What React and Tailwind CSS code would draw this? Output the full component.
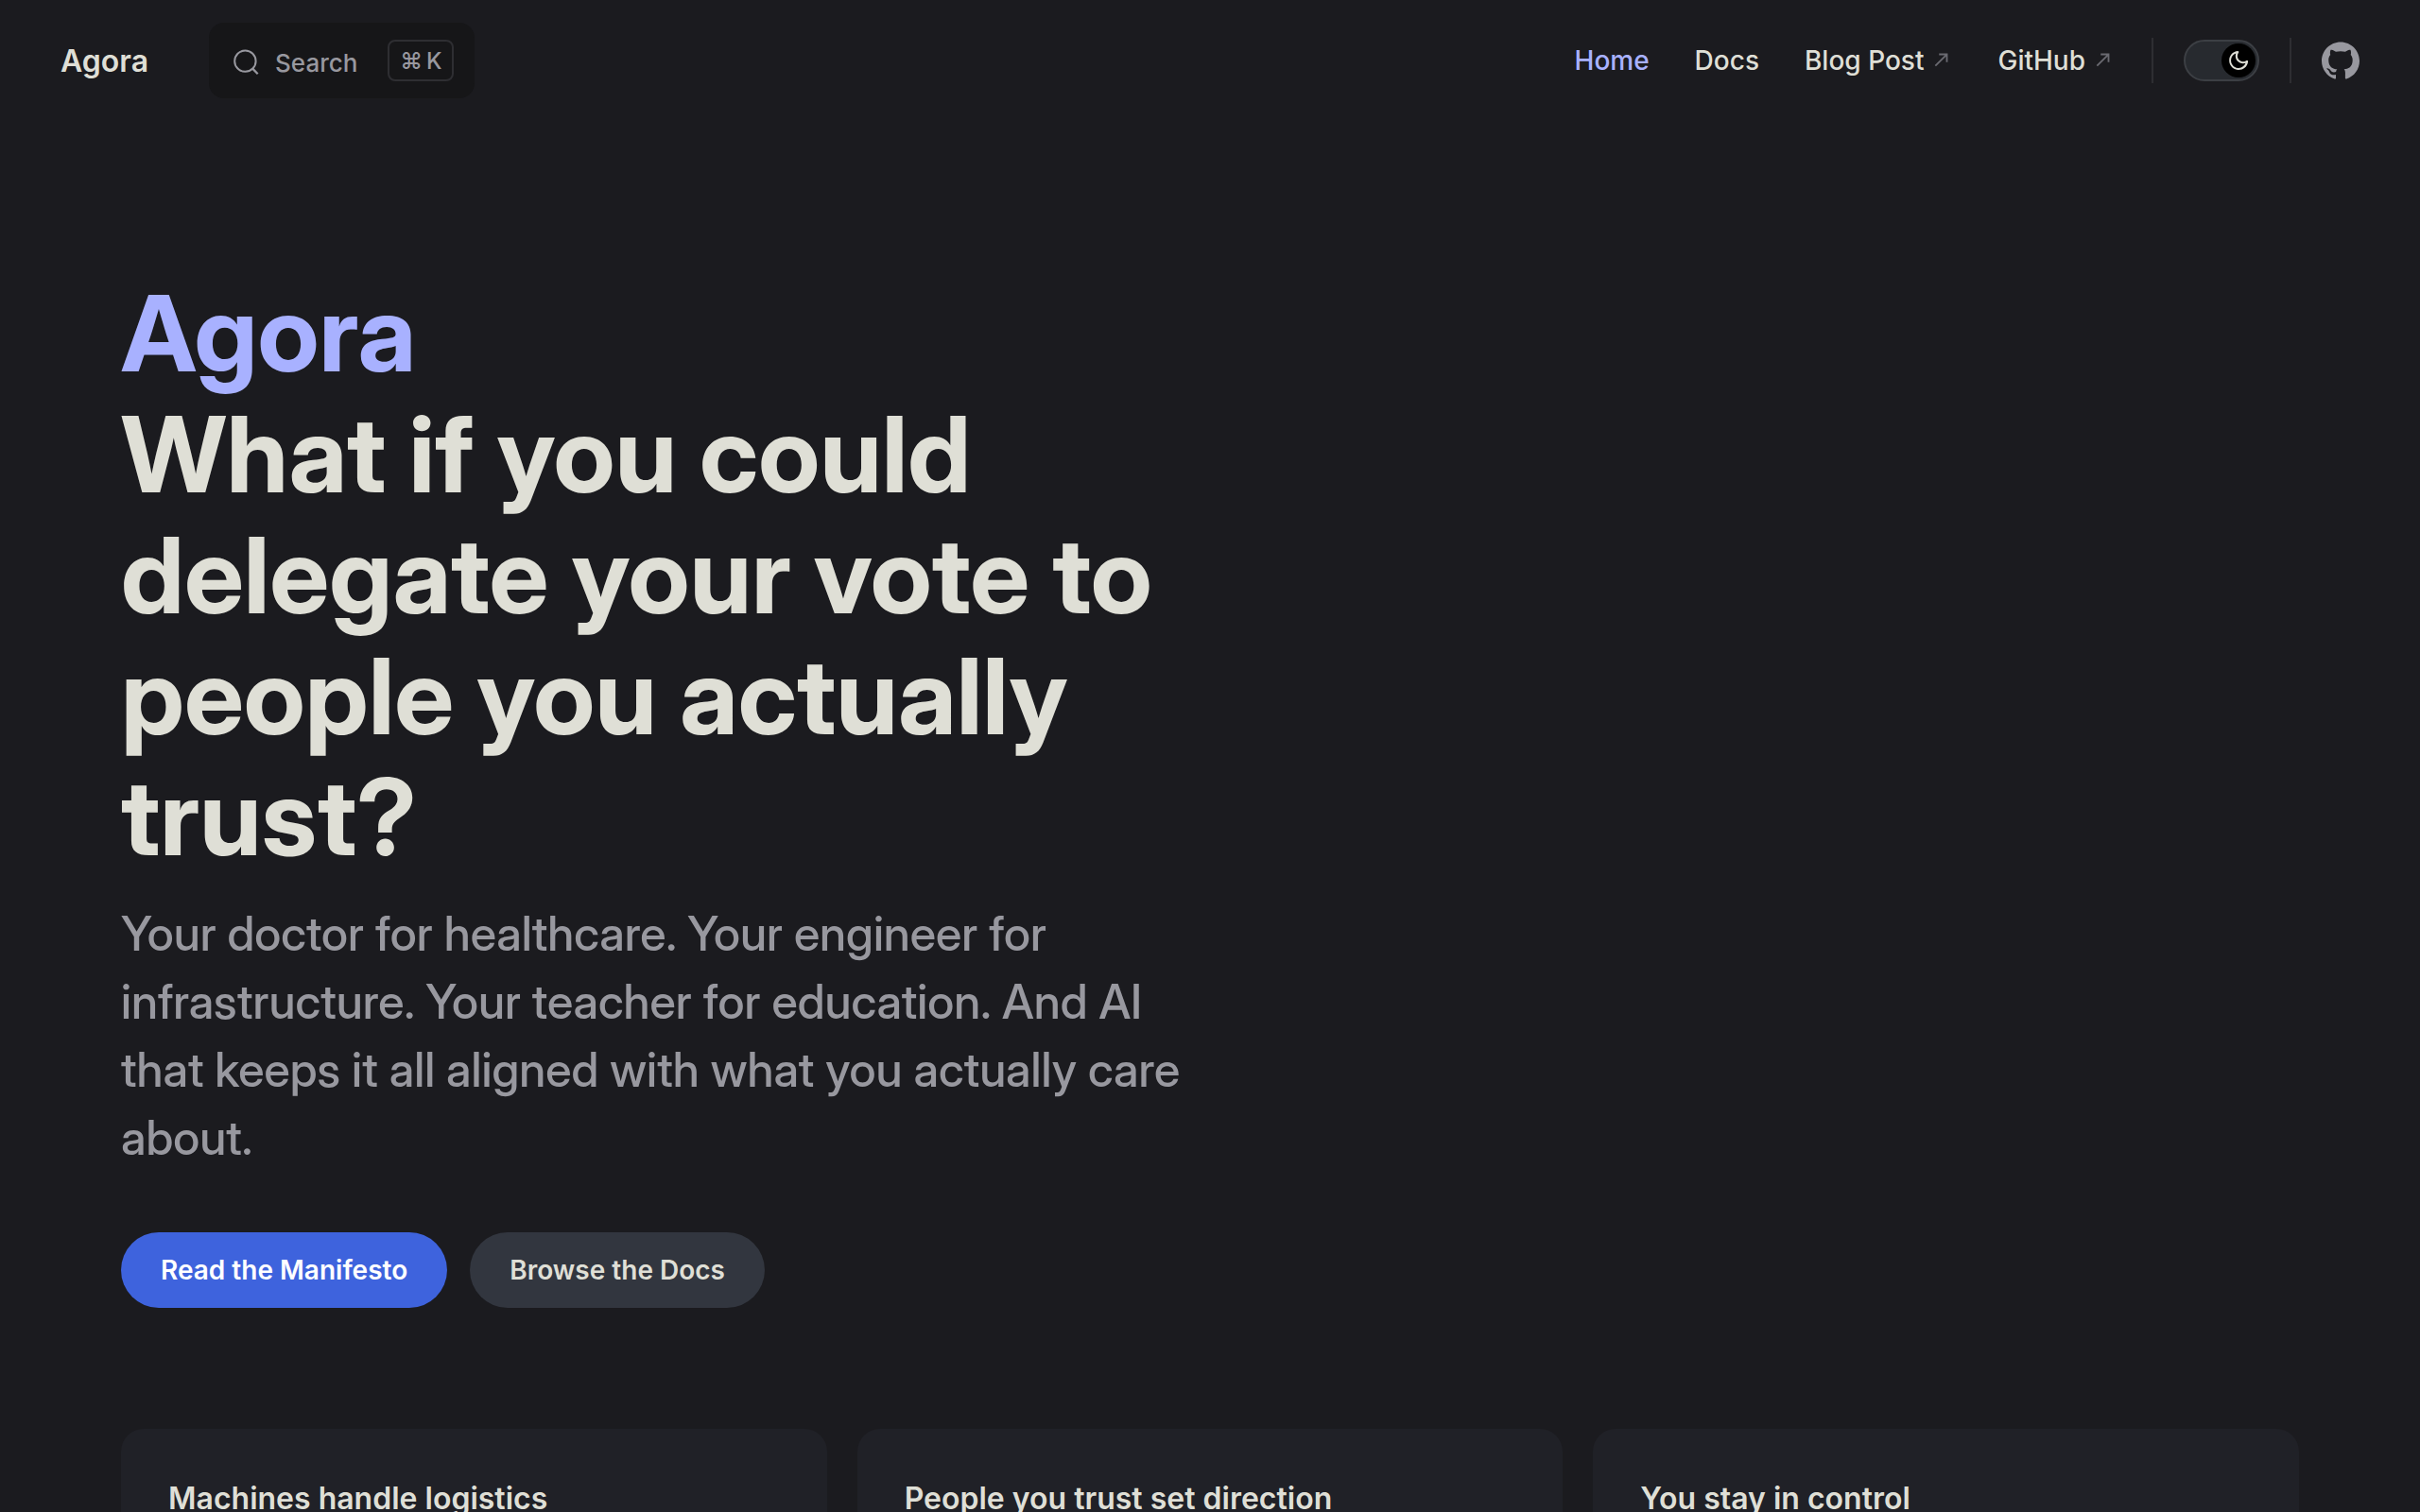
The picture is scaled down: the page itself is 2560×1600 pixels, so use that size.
import React from 'react';
import { SiGithub } from 'react-icons/si';

const navLinks = [
  { text: 'Home', href: '#', active: true },
  { text: 'Docs', href: '#docs' },
  { text: 'Blog Post', href: '#blog', external: true },
  { text: 'GitHub', href: '#github', external: true },
];

const features = [
  'Machines handle logistics',
  'People you trust set direction',
  'You stay in control',
];

const ExternalIcon = () => (
  <svg viewBox="0 0 24 24" className="w-[22px] h-[22px] mb-0.5 ml-2 text-[#6a6a71]" fill="currentColor" aria-hidden="true">
    <path d="M9 5v2h6.59L4 18.59 5.41 20 17 8.41V15h2V5H9z" />
  </svg>
);

const MoonIcon = () => (
  <svg viewBox="0 0 24 24" className="w-6 h-6" fill="currentColor" aria-hidden="true">
    <path
      fillRule="evenodd"
      d="M12.1,22c-0.3,0-0.6,0-0.9,0c-5.5-0.5-9.5-5.4-9-10.9c0.4-4.8,4.2-8.6,9-9c0.4,0,0.8,0.2,1,0.5c0.2,0.3,0.2,0.8-0.1,1.1c-2,2.7-1.4,6.4,1.3,8.4c2.1,1.6,5,1.6,7.1,0c0.3-0.2,0.7-0.3,1.1-0.1c0.3,0.2,0.5,0.6,0.5,1c-0.2,2.7-1.5,5.1-3.6,6.8C16.6,21.2,14.4,22,12.1,22zM9.3,4.4c-2.9,1-5,3.6-5.2,6.8c-0.4,4.4,2.8,8.3,7.2,8.7c2.1,0.2,4.2-0.4,5.8-1.8c1.1-0.9,1.9-2.1,2.4-3.4c-2.5,0.9-5.3,0.5-7.5-1.1C9.2,11.4,8.1,7.7,9.3,4.4z"
    />
  </svg>
);

const SearchButton = () => (
  <button type="button" className="flex items-center h-20 pl-6 pr-[22px] rounded-2xl bg-[#161618] text-[#98989f]">
    <svg viewBox="0 0 20 20" className="w-8 h-8" fill="none" stroke="currentColor" aria-hidden="true">
      <circle cx="9" cy="10.4" r="7" strokeWidth="1.25" />
      <path d="M13.9 15.4l3.4 3.5" strokeWidth="1.4" />
    </svg>
    <span className="ml-3.5 mt-1.5 text-[26px] leading-8 font-medium">Search</span>
    <span className="flex items-center justify-center gap-1 w-[70px] h-11 ml-8 pt-0.5 rounded-lg border-2 border-[#2e2e32] text-2xl font-medium">
      <kbd className="font-[Inter,sans-serif]">⌘</kbd>
      <kbd className="font-[Inter,sans-serif]">K</kbd>
    </span>
  </button>
);

const Navbar = () => {
  return (
    <header className="flex items-center justify-between h-32 px-16">
      <div className="flex items-center gap-16">
        <a href="#" className="mt-0.5 text-[32px] font-semibold">Agora</a>
        <SearchButton />
      </div>

      <div className="flex items-center">
        <nav className="flex items-center text-[28px] font-medium">
          {navLinks.map((link) => (
            <a
              key={link.text}
              href={link.href}
              className={link.active ? 'flex items-center px-6 text-[#a8b1ff]' : 'flex items-center px-6'}
            >
              {link.text}
              {link.external && <ExternalIcon />}
            </a>
          ))}
        </nav>

        {/* Theme switch */}
        <div className="w-0.5 h-12 ml-4 mr-8 bg-[#2e2e32]" />
        <button
          type="button"
          role="switch"
          aria-checked="true"
          aria-label="Dark mode"
          className="flex items-center justify-end w-20 h-11 p-0.5 rounded-full border-2 border-[#3c3f44] bg-[#272a2f]"
        >
          <span className="flex items-center justify-center w-9 h-9 rounded-full bg-black">
            <MoonIcon />
          </span>
        </button>

        <div className="w-0.5 h-12 mx-8 bg-[#2e2e32]" />
        <a href="#github" aria-label="GitHub" className="text-[#98989f]">
          <SiGithub className="w-10 h-10" />
        </a>
      </div>
    </header>
  );
};

const Hero = () => {
  return (
    <section className="px-32 pt-40 pb-32">
      <div className="max-w-[1184px] font-['Inter_Display',Inter,sans-serif]">
        <h1 className="text-[112px] leading-[128px] font-bold">
          <span className="block text-[#a8b1ff]">Agora</span>
          <span className="block">What if you could delegate your vote to people you actually trust?</span>
        </h1>
        <p className="max-w-[1152px] pt-6 text-[50px] leading-[72px] font-medium text-[#98989f]">
          Your doctor for healthcare. Your engineer for infrastructure. Your teacher for education. And AI that keeps it
          all aligned with what you actually care about.
        </p>
      </div>
      <div className="flex gap-6 pt-16 text-[28px] leading-[80px] font-semibold">
        <a href="#manifesto" className="px-[42px] rounded-full bg-[#3e63dd] text-white">Read the Manifesto</a>
        <a href="#docs" className="px-[42px] rounded-full bg-[#32363f]">Browse the Docs</a>
      </div>
    </section>
  );
};

const Features = () => {
  return (
    <section className="grid grid-cols-3 gap-8 px-32">
      {features.map((title) => (
        <article key={title} className="p-[50px] rounded-3xl bg-[#202127]">
          <h2 className="text-[32px] leading-[48px] font-semibold">{title}</h2>
        </article>
      ))}
    </section>
  );
};

const App = () => {
  return (
    <div className="h-screen overflow-hidden bg-[#1b1b1f] text-[#dfdfd6] font-[Inter,sans-serif]">
      <Navbar />
      <main>
        <Hero />
        <Features />
      </main>
    </div>
  );
};

export default App;
